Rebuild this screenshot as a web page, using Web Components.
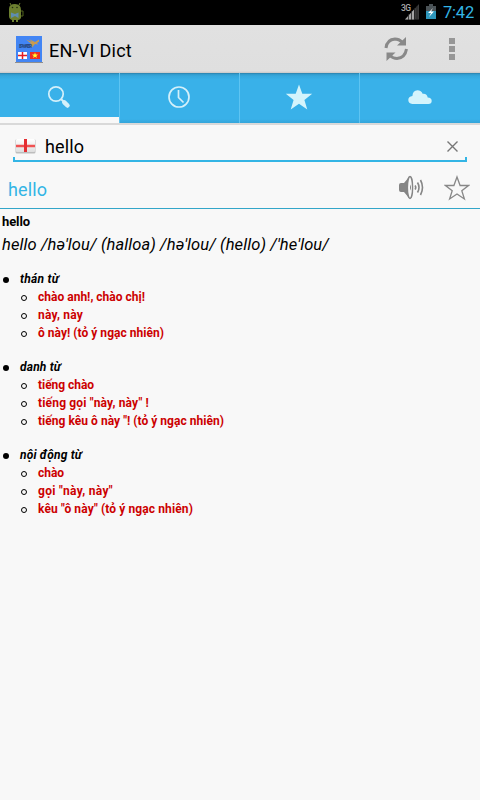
<!DOCTYPE html>
<html lang="vi">
<head>
<meta charset="utf-8">
<title>EN-VI Dict</title>
<style>
html, body { margin: 0; height: 100%; background: #f8f8f8; }
body { font-family: Roboto, "Noto Sans", sans-serif; color: #000; overflow: hidden; }
</style>
</head>
<body>
<dict-app></dict-app>
<script>
const define = (name, css, html, setup) => customElements.define(name, class extends HTMLElement {
  connectedCallback() {
    if (this.shadowRoot) return;
    this.attachShadow({ mode: 'open' }).innerHTML = `<style>${css}</style>${html}`;
    if (setup) setup(this);
  }
});

// Text run whose tracking is adjusted so that it takes the width given in "w".
define('text-run', ':host{display:inline-block;white-space:pre;width:max-content}', '<slot></slot>', el => {
  const w = +el.getAttribute('w');
  if (!w) return;
  el.style.letterSpacing = (w - el.getBoundingClientRect().width) / el.textContent.length + 'px';
});

define('status-bar', `
:host{display:flex;height:25px;background:#000;align-items:center;padding:0 6px 0 7px;box-sizing:border-box;color:#33b5e5;font-size:16.5px;line-height:25px}
svg{display:block;flex:none}.grow{flex:1}.bat{margin:0 7px 0 6px}`, `
<svg width="18" height="25" viewBox="0 0 18 25"><path d="M4 5L3 3M12 5l1-2" stroke="#6d8030"/><path d="M2 9Q2 4 8 4q6 0 6 6v8q-1 2-3 2v2H9v-2H7v2H5v-2q-3-1-3-4z" fill="#6d8030"/><path d="M14 11h2v5h-2" fill="none" stroke="#52651f"/><circle cx="5.500" cy="7.500" r=".8" fill="#222d13"/><circle cx="10" cy="7.500" r=".8" fill="#222d13"/><path d="M4 12.500l4 1.500 3.500-1.500v5.500l-3.500-2-4 2z" fill="#5e8daf"/></svg>
<span class="grow"></span>
<svg width="19" height="25" viewBox="0 0 19 25"><path d="M18 4v15.500H4z" fill="#3c3c3c"/><path d="M4 19.500l9-10v10z" fill="#a5a5a5"/><path d="M7.500 14v6M10.500 11v9M13.500 8v12M16 6v14" stroke="#222" stroke-width=".8"/><text x="0" y="11" font-size="8.500" font-weight="500" fill="#aaa" font-family="Roboto,sans-serif" textLength="10">3G</text></svg>
<svg class="bat" width="10" height="25" viewBox="0 0 10 25"><path d="M3 4h4v2h3v6H0V6h3z" fill="#4b5357"/><path d="M0 11h10v8H0z" fill="#2e96bb"/><path d="M7 8L2 13h3l-2 4 5-5.500H5z" fill="#fff"/></svg>
<text-run w="31">7:42</text-run>`);

define('action-bar', `
:host{display:flex;height:48px;background:linear-gradient(#e1e1e1,#dfdfdf 46px,#c8c8c8);align-items:center;padding-left:15px;box-sizing:border-box;font-size:18px}
svg{display:block;flex:none}.title{flex:1;display:flex;margin-left:6px;padding-top:2px}.menu{margin-left:16px}`, `
<svg width="28" height="48" viewBox="0 0 28 48"><path d="M0 37.500h28" stroke="#8e8e8e"/><rect x="1" y="11" width="26" height="26" fill="#4285f4"/><path d="M11 14.500l6 2.500-3-3 6 3 4-2.500v2l-2 1.500 1 1.500-3-.5-3 3.500-1-2.500-3 .5 3-2z" fill="#c99b51"/><text x="4" y="22.500" font-size="5" font-weight="700" fill="#284b86" font-family="Roboto,sans-serif" textLength="13">EPWATER</text><rect x="3" y="27" width="9" height="7" fill="#fff"/><path d="M3 30.500h9M7.500 27v7" stroke="#e21c24" stroke-width="1.500"/><rect x="15" y="27" width="10" height="7" fill="#ed2f20"/><path d="M20 27.600l.8 2h2.200l-1.700 1.300.6 2.200-1.900-1.300-1.900 1.300.6-2.200-1.700-1.300h2.200z" fill="#ff3"/></svg>
<div class="title"><text-run w="83">EN-VI Dict</text-run></div>
<svg width="28" height="48" viewBox="0 0 28 48"><g fill="none" stroke="#898989" stroke-width="3"><path d="M4 23Q5 14.500 13 14q4 0 7 3M24.500 24Q23 33 15 33.500q-4 0-7-3"/></g><path d="M24 12v8.500h-9zM4.500 36v-8.500h9z" fill="#898989"/></svg>
<svg class="menu" width="54" height="48" viewBox="0 0 54 48"><path d="M23 13h6v6h-6zM23 21h6v6h-6zM23 29h6v6h-6z" fill="#979797"/></svg>`);

define('tab-item', `
:host{display:block;width:120px;height:50px;box-sizing:border-box;border-right:1px solid #5ec4f2}
:host([active]) .body{border-bottom:6px solid #f8f8f8}:host([last]){border:0}
.body{height:50px;box-sizing:border-box}`, '<div class="body"><slot></slot></div>');
define('tab-bar', `
:host{display:flex;height:52px;box-sizing:border-box;background:linear-gradient(#2a7aa3 0,#3099ca 1px,#35a8dd 3px,#39b1e9 7px,#39b1e9 46px,#34a5da 50px);border-bottom:2px solid #d9d9d9}
svg{display:block;width:119px;height:44px}`, `
<tab-item active><svg viewBox="0 0 119 44" fill="none" stroke="#d4f0fa"><circle cx="56" cy="21" r="7.200" stroke-width="1.700"/><path d="M61 26l3 3" stroke-width="2"/><path d="M64.300 29.300l3.200 3.200" stroke-width="4.500" stroke-linecap="round"/></svg></tab-item>
<tab-item><svg viewBox="0 0 119 44" fill="none" stroke="#d4f0fa" stroke-width="1.700"><circle cx="59" cy="24" r="10"/><path d="M58.500 17v7.500l5 5"/></svg></tab-item>
<tab-item><svg viewBox="0 0 119 44"><path d="M59 11.500l3.300 9.300h9.900l-7.800 6.100 2.900 9.700-8.300-5.900-8.300 5.900 2.900-9.700-7.800-6.100h9.900z" fill="#d4f4fc"/></svg></tab-item>
<tab-item last><svg viewBox="0 0 119 44"><path d="M52.300 31q-4-.4-4-4 0-3.500 4.100-4 .4-5.500 5-5.700 4 0 5.200 3.500 4.500-.5 5.100 3.800 4 .2 4 3.300 0 2.700-3.400 3.100z" fill="#d4f4fc"/></svg></tab-item>`);

define('search-field', `
:host{display:flex;align-items:center;height:37px;margin:0 13px;font-size:18px;box-sizing:border-box;padding:6px 8px 0 2px;background:linear-gradient(#33b5e5,#33b5e5) 0 100%/100% 2px no-repeat,linear-gradient(#33b5e5,#33b5e5) 0 100%/2px 5px no-repeat,linear-gradient(#33b5e5,#33b5e5) 100% 100%/2px 5px no-repeat}
svg{display:block}.q{flex:1;padding-left:8px;display:flex}`, `
<svg width="22" height="17" viewBox="0 0 22 17"><defs><linearGradient id="f" x2="0" y2="1"><stop stop-color="#fff"/><stop offset="1" stop-color="#dedede"/></linearGradient></defs><rect x=".5" y="1" width="20" height="14.500" rx="1.500" fill="#bdbdbd"/><rect x="1" y="1" width="19" height="13" rx="1" fill="url(#f)"/><path d="M1 8h19" stroke="#f05252" stroke-width="2.500"/><path d="M10.500 1v13" stroke="#e42e32" stroke-width="3"/></svg>
<div class="q"><text-run w="39">hello</text-run></div>
<svg width="13" height="16" viewBox="0 0 13 16"><path d="M1.500 2.500l10 10m0-10l-10 10" stroke="#777" stroke-width="1.400"/></svg>`);

define('word-header', `
:host{display:flex;align-items:center;height:47px;box-sizing:border-box;border-bottom:1px solid #33a6c9;padding:8px 10px 0 8px;color:#33b5e5;font-size:18px}
.w{flex:1}svg{display:block}.fav{margin-left:19px}`, `
<div class="w"><text-run w="39">hello</text-run></div>
<svg width="26" height="28" viewBox="0 0 26 28"><path d="M0 10q0-2 2-2h3l5-6q2-2 3 2 1 9 0 17-1 4-3 2l-5-6H2q-2 0-2-2z" fill="#858585"/><ellipse cx="11" cy="12.500" rx="2.600" ry="11" fill="#f8f8f8" stroke="#858585" stroke-width="1.400"/><path d="M11 9.500q2 3 0 6z" fill="#858585"/><path d="M16 10.500q1.500 2 0 4M18.500 7.500q3 5 0 10M21.500 5q4 7.500 0 15" fill="none" stroke="#858585" stroke-width="1.600"/></svg>
<svg class="fav" width="26" height="28" viewBox="0 0 26 28"><path d="M13 2l3.100 8.500h8.400l-6.700 5.200 2.600 8.300-7.400-5-7.400 5 2.600-8.300-6.700-5.200h8.400z" fill="none" stroke="#888" stroke-width="1.300"/></svg>`);

define('sense-item', `
:host{display:flex;height:18px;line-height:18px;font-size:12px;font-weight:700;color:#cc0000}
:host([group]){color:#000;font-style:italic}
svg{display:block;width:38px;height:18px;flex:none}:host([group]) svg{width:20px}
.o,:host([group]) .c{display:none}:host([group]) .o{display:block}`, `
<svg class="c"><circle cx="24" cy="10" r="2.500" fill="none" stroke="#000"/></svg>
<svg class="o"><circle cx="6" cy="10" r="3" fill="#000"/></svg><slot></slot>`);
define('sense-group', ':host{display:block;margin-bottom:16px}', '<slot></slot>');

const item = (t, w, a = '') => `<sense-item ${a}><text-run w="${w}">${t}</text-run></sense-item>`;
define('dict-entry', `
:host{display:block}
.h{height:25px;line-height:25px;font-size:13px;font-weight:700;padding-left:2px}
.p{height:20px;line-height:21px;font-size:16.5px;font-style:italic;padding-left:2px;margin-bottom:16px}`, `
<div class="h"><text-run w="28">hello</text-run></div>
<div class="p"><text-run w="327">hello /hə'lou/ (halloa) /hə'lou/ (hello) /'he'lou/</text-run></div>
<sense-group>${item('thán từ', 39, 'group')}${item('chào anh!, chào chị!', 107)}${item('này, này', 45)}${item('ô này! (tỏ ý ngạc nhiên)', 126)}</sense-group>
<sense-group>${item('danh từ', 41, 'group')}${item('tiếng chào', 56)}${item('tiếng gọi "này, này" !', 111)}${item('tiếng kêu ô này "! (tỏ ý ngạc nhiên)', 186)}</sense-group>
<sense-group>${item('nội động từ', 62, 'group')}${item('chào', 26)}${item('gọi "này, này"', 75)}${item('kêu "ô này" (tỏ ý ngạc nhiên)', 155)}</sense-group>`);

define('dict-app', ':host{display:flex;flex-direction:column;width:480px;height:800px;background:#f8f8f8}',
  '<status-bar></status-bar><action-bar></action-bar><tab-bar></tab-bar><search-field></search-field><word-header></word-header><dict-entry></dict-entry>');
</script>
</body>
</html>
